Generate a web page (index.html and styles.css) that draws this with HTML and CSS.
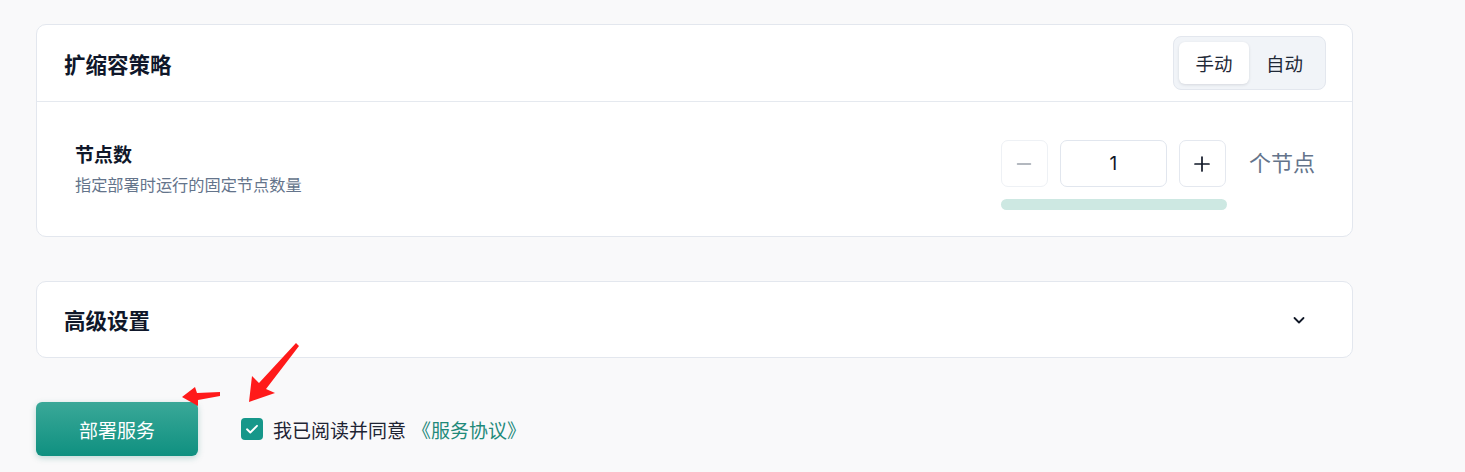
FILE: index.html
```html
<!DOCTYPE html>
<html lang="zh-CN">
<head>
<meta charset="utf-8">
<title>部署服务</title>
<link rel="stylesheet" href="styles.css">
</head>
<body>
<main class="page">
  <section class="card">
    <header class="card-head">
      <h2 class="card-title">扩缩容策略</h2>
      <div class="segmented">
        <button class="seg-btn active">手动</button>
        <button class="seg-btn">自动</button>
      </div>
    </header>
    <div class="card-body">
      <div class="row">
        <div class="row-text">
          <div class="row-label">节点数</div>
          <div class="row-desc">指定部署时运行的固定节点数量</div>
        </div>
        <div class="row-control">
          <div class="stepper-col">
            <div class="stepper">
              <button class="step-btn minus" aria-label="减少">
                <svg width="18" height="18" viewBox="0 0 18 18"><path d="M2.5 9h13" stroke="#9aa1ab" stroke-width="1.5" stroke-linecap="round"/></svg>
              </button>
              <div class="step-input">1</div>
              <button class="step-btn plus" aria-label="增加">
                <svg width="18" height="18" viewBox="0 0 18 18"><path d="M2 9h14M9 2v14" stroke="#111827" stroke-width="1.7" stroke-linecap="round"/></svg>
              </button>
            </div>
            <div class="track"></div>
          </div>
          <span class="unit">个节点</span>
        </div>
      </div>
    </div>
  </section>

  <section class="card collapsed">
    <header class="card-head plain">
      <h2 class="card-title">高级设置</h2>
      <svg class="chevron" width="16" height="16" viewBox="0 0 16 16"><path d="M3.5 6l4.5 4.5L12.5 6" fill="none" stroke="#111827" stroke-width="1.8" stroke-linecap="round" stroke-linejoin="round"/></svg>
    </header>
  </section>

  <div class="actions">
    <button class="deploy">部署服务</button>
    <label class="agree">
      <span class="checkbox">
        <svg width="16" height="16" viewBox="0 0 16 16"><path d="M3 8.3l3.3 3.2L13 4.8" fill="none" stroke="#fff" stroke-width="1.9" stroke-linecap="round" stroke-linejoin="round"/></svg>
      </span>
      <span class="agree-text">我已阅读并同意</span>
      <a class="agree-link" href="#">《服务协议》</a>
    </label>
  </div>
</main>

<svg class="annot" width="1465" height="472" viewBox="0 0 1465 472">
  <polygon points="182,397 195,387 197,393 220,392 220,396 198,400 198,406" fill="#ff1a1a"/>
  <polygon points="249,402 252,376 259,383 296,343 299,346 266,389 275,393" fill="#ff1a1a"/>
</svg>
</body>
</html>
```

FILE: styles.css
```css
* { box-sizing: border-box; }
html, body { margin: 0; padding: 0; }
body {
  background: #f9f9fa;
  font-family: Inter, "Noto Sans CJK SC", sans-serif;
  color: #0f172a;
  width: 1465px;
  height: 472px;
  overflow: hidden;
  position: relative;
}
.page {
  width: 1317px;
  margin-left: 36px;
  padding-top: 24px;
  display: flex;
  flex-direction: column;
  gap: 44px;
}
.card {
  background: #fff;
  border: 1px solid #e3e7ee;
  border-radius: 10px;
}
.card-head {
  height: 77px;
  display: flex;
  align-items: center;
  justify-content: space-between;
  padding: 0 26px 0 27px;
  border-bottom: 1px solid #e5e9ef;
}
.card-head.plain { border-bottom: none; height: 75px; padding-right: 45px; }
.card-title {
  margin: 0;
  font-size: 21.5px;
  font-weight: 700;
  color: #0f172a;
  letter-spacing: 0;
}
.segmented {
  display: flex;
  padding: 5px;
  background: #f1f4f8;
  border: 1px solid #e3e7ee;
  border-radius: 8px;
}
.seg-btn {
  width: 71px;
  height: 42px;
  border: none;
  background: transparent;
  font-family: inherit;
  font-size: 18.5px;
  color: #1f2937;
  border-radius: 6px;
  cursor: pointer;
  padding: 0;
}
.seg-btn.active {
  background: #fff;
  box-shadow: 0 1px 3px rgba(15, 23, 42, 0.12);
  width: 70px;
}
.card-body {
  padding: 38px 37px 26px 38px;
}
.row {
  display: flex;
  justify-content: space-between;
  align-items: flex-start;
}
.row-text { padding-top: 3px; }
.row-label {
  font-size: 19px;
  font-weight: 700;
  color: #0f172a;
  line-height: 25px;
}
.row-desc {
  margin-top: 7px;
  font-size: 16.2px;
  color: #64748b;
  line-height: 20px;
}
.row-control {
  display: flex;
  align-items: flex-start;
  gap: 22px;
}
.stepper-col {
  display: flex;
  flex-direction: column;
  gap: 12px;
}
.stepper {
  display: flex;
  gap: 12px;
}
.step-btn {
  width: 47px;
  height: 47px;
  border: 1px solid #e4e8ef;
  border-radius: 7px;
  background: #fff;
  display: flex;
  align-items: center;
  justify-content: center;
  padding: 0;
  cursor: pointer;
}
.step-btn.minus { border-color: #eef1f5; }
.step-input {
  width: 107px;
  height: 47px;
  border: 1px solid #e1e6ee;
  border-radius: 7px;
  display: flex;
  align-items: center;
  justify-content: center;
  font-size: 19px;
  color: #111827;
}
.track {
  width: 226px;
  height: 11px;
  border-radius: 6px;
  background: #cde8e2;
}
.unit {
  font-size: 22px;
  color: #64748b;
  line-height: 47px;
}
.chevron { display: block; }
.actions {
  display: flex;
  align-items: center;
  gap: 43px;
}
.deploy {
  width: 162px;
  height: 54px;
  border: none;
  border-radius: 6px;
  background: linear-gradient(180deg, #3aa898 0%, #0f9080 100%);
  color: #fff;
  font-family: inherit;
  font-size: 19px;
  box-shadow: 0 2px 6px rgba(15, 120, 105, 0.25);
  cursor: pointer;
  padding: 0;
}
.agree {
  display: flex;
  align-items: center;
  font-size: 19px;
  color: #1e2433;
}
.checkbox {
  width: 22px;
  height: 22px;
  border-radius: 4px;
  background: #16978a;
  display: flex;
  align-items: center;
  justify-content: center;
  margin-right: 10px;
}
.agree-link {
  margin-left: 6px;
  color: #1f8a7a;
  text-decoration: none;
}
.annot {
  position: absolute;
  left: 0;
  top: 0;
  pointer-events: none;
}
```
